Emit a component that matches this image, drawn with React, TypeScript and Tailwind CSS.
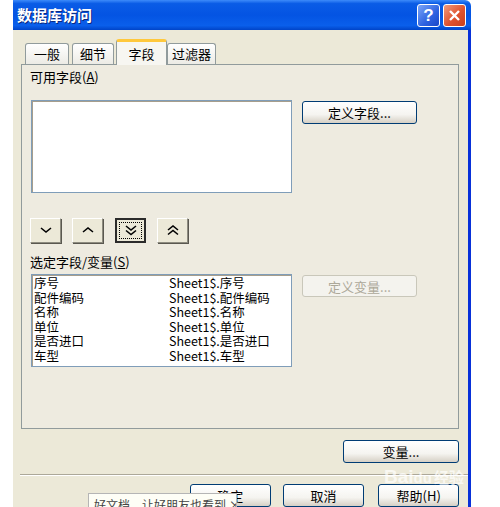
import React from "react";

const cjk = { fontFamily: '"Noto Sans CJK SC", "Noto Sans", sans-serif' };

const fields = [
  ["序号", "Sheet1$.序号"],
  ["配件编码", "Sheet1$.配件编码"],
  ["名称", "Sheet1$.名称"],
  ["单位", "Sheet1$.单位"],
  ["是否进口", "Sheet1$.是否进口"],
  ["车型", "Sheet1$.车型"],
];

function XpButton({
  label,
  className,
  disabled,
}: {
  label: string;
  className: string;
  disabled?: boolean;
}) {
  return (
    <div
      className={
        "flex items-center justify-center rounded-[3px] border text-[13px] leading-none " +
        (disabled
          ? "border-[#C9C7BA] bg-[#F4F3EE] text-[#ACA899] "
          : "border-[#003C74] bg-[linear-gradient(to_bottom,#FFFFFF_0%,#F5F4F0_60%,#D6D0C5_100%)] text-black ") +
        className
      }
    >
      {label}
    </div>
  );
}

function Chevron({ dir, double }: { dir: "down" | "up"; double?: boolean }) {
  const one = (y: number) =>
    dir === "down" ? `M1 ${y} L6 ${y + 4} L11 ${y}` : `M1 ${y + 4} L6 ${y} L11 ${y + 4}`;
  return (
    <svg width="12" height={double ? 11 : 7} viewBox={`0 0 12 ${double ? 11 : 7}`}>
      <path d={one(1)} fill="none" stroke="#000" strokeWidth="1.6" />
      {double && <path d={one(5.5)} fill="none" stroke="#000" strokeWidth="1.6" />}
    </svg>
  );
}

function ArrowButton({
  dir,
  double,
  pressed,
  className,
}: {
  dir: "down" | "up";
  double?: boolean;
  pressed?: boolean;
  className: string;
}) {
  return (
    <div
      className={
        "flex h-[25px] w-[31px] items-center justify-center bg-[#ECE9D8] " +
        (pressed
          ? "border-2 border-[#2B2B2B] "
          : "border border-t-white border-l-white border-r-[#8E8C80] border-b-[#8E8C80] shadow-[1px_1px_0_#5A5850] ") +
        className
      }
    >
      {pressed ? (
        <div className="flex h-[17px] w-[23px] items-center justify-center border border-dotted border-black">
          <Chevron dir={dir} double={double} />
        </div>
      ) : (
        <Chevron dir={dir} double={double} />
      )}
    </div>
  );
}

function Tab({ label, className, active }: { label: string; className: string; active?: boolean }) {
  return (
    <div
      className={
        "relative flex items-center justify-center rounded-t-[3px] border border-b-0 border-[#919B9C] text-[13px] " +
        (active
          ? "z-10 -mb-px h-[26px] border-t-[3px] border-t-[#FFC83C] bg-[#F7F6F1] "
          : "h-[21px] bg-[linear-gradient(to_bottom,#FFFFFF,#ECEBE5)] ") +
        className
      }
    >
      {label}
    </div>
  );
}

export default function App() {
  return (
    <div className="relative h-[507px] w-[500px] overflow-hidden bg-white" style={cjk}>
      <div className="ml-[13px] flex w-[458px] flex-col">
        {/* Title bar */}
        <div className="flex h-[30px] items-center rounded-tr-[6px] bg-[linear-gradient(to_bottom,#3D8BFA_0%,#0A5CE6_12%,#0454E3_50%,#0A5FEB_85%,#0044C8_100%)] pl-[4px] pr-[5px]">
          <span className="text-[15px] font-bold text-white [text-shadow:1px_1px_0_#0A2A80]">
            数据库访问
          </span>
          <div className="ml-auto flex gap-[3px]">
            <div className="flex h-[23px] w-[23px] items-center justify-center rounded-[3px] border border-white bg-[linear-gradient(135deg,#7BA5F8,#2D62E0_60%,#1A48C8)] text-[17px] font-bold leading-none text-white" style={{ fontFamily: '"Liberation Sans", sans-serif' }}>
              ?
            </div>
            <div className="flex h-[23px] w-[23px] items-center justify-center rounded-[3px] border border-white bg-[linear-gradient(135deg,#F09B7E,#E0532F_55%,#C8401E)]">
              <svg width="13" height="13" viewBox="0 0 13 13">
                <path d="M2 2 L11 11 M11 2 L2 11" stroke="#fff" strokeWidth="2.4" />
              </svg>
            </div>
          </div>
        </div>

        {/* Body */}
        <div className="flex flex-col border-r-[3px] border-[#0831D9] bg-[#ECE9D8] pb-[40px] pl-[8px] pr-[9px]">
          {/* Tabs */}
          <div className="mt-[10px] flex h-[24px] items-end">
            <Tab label="一般" className="ml-[4px] w-[44px]" />
            <Tab label="细节" className="ml-[3px] w-[42px]" />
            <Tab label="字段" className="ml-[2px] w-[51px]" active />
            <Tab label="过滤器" className="w-[49px]" />
          </div>

          {/* Panel */}
          <div className="flex h-[365px] w-[438px] flex-col border border-[#919B9C] bg-[#EEEBE0] text-[13px]">
            <div className="ml-[8px] mt-[4px] h-[16px] leading-[16px]">
              可用字段(<span className="underline">A</span>)
            </div>
            <div className="mt-[15px] flex items-start">
              <div className="ml-[9px] h-[93px] w-[261px] border border-[#7F9DB9] bg-white shadow-[inset_1px_1px_0_#A79E8C]" />
              <XpButton label="定义字段..." className="ml-[10px] mt-[1px] h-[23px] w-[115px]" />
            </div>

            <div className="ml-[8px] mt-[25px] flex">
              <ArrowButton dir="down" className="" />
              <ArrowButton dir="up" className="ml-[11px]" />
              <ArrowButton dir="down" double pressed className="ml-[12px]" />
              <ArrowButton dir="up" double className="ml-[11px]" />
            </div>

            <div className="ml-[8px] mt-[11px] h-[16px] leading-[16px]">
              选定字段/变量(<span className="underline">S</span>)
            </div>
            <div className="mt-[4px] flex items-start">
              <div className="ml-[9px] h-[93px] w-[261px] border border-[#7F9DB9] bg-white pl-[2px] pt-[1px] shadow-[inset_1px_1px_0_#A79E8C]">
                {fields.map(([a, b]) => (
                  <div key={a} className="grid h-[14.6px] grid-cols-[135px_1fr] text-[12.5px] leading-[14.6px] text-black">
                    <span>{a}</span>
                    <span>{b}</span>
                  </div>
                ))}
              </div>
              <XpButton label="定义变量..." disabled className="ml-[10px] mt-[1px] h-[22px] w-[115px]" />
            </div>
          </div>

          <XpButton label="变量..." className="ml-[322px] mt-[11px] h-[23px] w-[116px] text-[13px]" />

          <div className="-mr-[9px] ml-[-1px] mt-[11px] h-[2px] border-t border-b border-t-[#ACA899] border-b-white" />

          <div className="mt-[8px] flex text-[13px]">
            <XpButton label="确定" className="ml-[169px] h-[23px] w-[81px]" />
            <XpButton label="取消" className="ml-[12px] h-[23px] w-[82px]" />
            <XpButton label="帮助(H)" className="ml-[14px] h-[23px] w-[81px]" />
          </div>
        </div>
      </div>

      {/* Share tooltip over the dialog */}
      <div className="absolute left-[88px] top-[493px] h-[22px] w-[149px] overflow-hidden whitespace-nowrap border border-[#B5B5B5] bg-[#FEFEF6] pl-[5px] pt-[4px] text-[12px] leading-[14px] text-[#444]">
        好文档，让好朋友也看到 ×
      </div>

      {/* Watermark */}
      <div className="pointer-events-none absolute left-[384px] top-[463px] text-[19px] font-bold text-white/70" style={{ fontFamily: '"Liberation Sans", sans-serif' }}>
        Bai<span className="text-[15px]">du</span>
        <span className="ml-[2px] text-[15px]" style={cjk}>经验</span>
      </div>
    </div>
  );
}
